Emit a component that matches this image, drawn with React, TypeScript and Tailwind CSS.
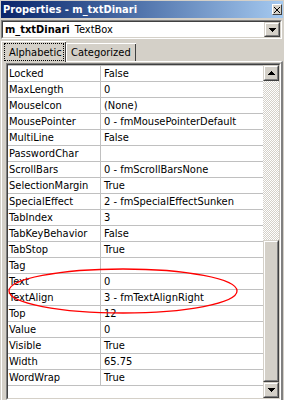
import React from "react";

const rows: [string, string][] = [
  ["Locked", "False"],
  ["MaxLength", "0"],
  ["MouseIcon", "(None)"],
  ["MousePointer", "0 - fmMousePointerDefault"],
  ["MultiLine", "False"],
  ["PasswordChar", ""],
  ["ScrollBars", "0 - fmScrollBarsNone"],
  ["SelectionMargin", "True"],
  ["SpecialEffect", "2 - fmSpecialEffectSunken"],
  ["TabIndex", "3"],
  ["TabKeyBehavior", "False"],
  ["TabStop", "True"],
  ["Tag", ""],
  ["Text", "0"],
  ["TextAlign", "3 - fmTextAlignRight"],
  ["Top", "12"],
  ["Value", "0"],
  ["Visible", "True"],
  ["Width", "65.75"],
  ["WordWrap", "True"],
];

function Raised({ className = "", children }: { className?: string; children?: React.ReactNode }) {
  return (
    <div className={`border border-t-[#d4d0c8] border-l-[#d4d0c8] border-r-[#404040] border-b-[#404040] ${className}`}>
      <div className="w-full h-full border border-t-white border-l-white border-r-[#808080] border-b-[#808080] bg-[#d4d0c8] flex items-center justify-center">
        {children}
      </div>
    </div>
  );
}

function Sunken({ className = "", innerClassName = "", children }: { className?: string; innerClassName?: string; children?: React.ReactNode }) {
  return (
    <div className={`border border-t-[#808080] border-l-[#808080] border-r-white border-b-white ${className}`}>
      <div className={`w-full h-full border border-t-[#404040] border-l-[#404040] border-r-[#d4d0c8] border-b-[#d4d0c8] ${innerClassName}`}>
        {children}
      </div>
    </div>
  );
}

function TriDown() {
  return (
    <svg width="7" height="4" viewBox="0 0 7 4" shapeRendering="crispEdges">
      <polygon points="0,0 7,0 3.5,4" fill="#000" />
    </svg>
  );
}

function TriUp() {
  return (
    <svg width="7" height="4" viewBox="0 0 7 4" shapeRendering="crispEdges">
      <polygon points="0,4 7,4 3.5,0" fill="#000" />
    </svg>
  );
}

export default function App() {
  return (
    <div className="relative w-[284px] h-[400px] overflow-hidden bg-[#d4d0c8] font-[DejaVu_Sans_Condensed,DejaVu_Sans,sans-serif] text-[11px] leading-none text-black">
      <div className="flex flex-col h-full pl-[1px] pt-[1px] pr-[1px]">
        {/* Title bar */}
        <div className="flex items-center h-[17px] bg-linear-to-r from-[#0a246a] to-[#a6caf0] pl-[2px] pr-[1px]">
          <span className="font-bold text-white text-[11px]">Properties - m_txtDinari</span>
          <div className="ml-auto w-[10px] h-[11px] border border-t-white border-l-white border-r-[#404040] border-b-[#404040] bg-[#d4d0c8] flex items-center justify-center">
            <svg width="6" height="6" viewBox="0 0 6 6" shapeRendering="crispEdges">
              <path d="M0 0 L6 6 M6 0 L0 6" stroke="#000" strokeWidth="1.2" />
            </svg>
          </div>
        </div>

        {/* Object combo */}
        <Sunken className="mt-[2px] h-[19px] mr-[1px]" innerClassName="bg-white flex items-center">
          <div className="flex-1 flex items-center pl-[2px] whitespace-nowrap">
            <span className="font-bold">m_txtDinari</span>
            <span className="ml-[5px]">TextBox</span>
          </div>
          <Raised className="w-[16px] h-[15px]">
            <TriDown />
          </Raised>
        </Sunken>

        {/* Tabs */}
        <div className="flex items-end h-[20px] mt-[2px] relative z-10">
          <div className="w-[65px] h-[21px] -mb-[1px] border-l border-t border-white bg-[#d4d0c8] flex">
            <div className="flex-1 flex pt-[1px] pb-[1px] pl-[2px] pr-[0px]">
              <div className="flex-1 border border-dotted border-black flex items-center pl-[4px]">Alphabetic</div>
            </div>
            <div className="w-[2px] border-r border-[#404040] bg-[#808080] border-l-0 [background:linear-gradient(to_right,#d4d0c8_0_1px,#808080_1px)]" />
          </div>
          <div className="w-[70px] h-[18px] border-l border-t border-white flex">
            <div className="flex-1 flex items-center pl-[4px]">Categorized</div>
            <div className="w-[2px] border-r border-[#404040] [background:linear-gradient(to_right,#d4d0c8_0_1px,#808080_1px)]" />
          </div>
        </div>

        {/* Panel */}
        <div className="flex-1 flex flex-col border-t border-l border-white border-r-2 border-r-[#808080] pt-[1px] pl-[4px]">
          <Sunken className="flex-1" innerClassName="flex bg-white">
            <div className="flex-1 flex flex-col border-t border-[#c0c0c0]">
              {rows.map(([name, value]) => (
                <div key={name} className="flex h-[16px] border-b border-[#c0c0c0] whitespace-nowrap">
                  <div className="w-[93px] border-r border-[#c0c0c0] flex items-center pl-[1px] overflow-hidden">{name}</div>
                  <div className="flex-1 flex items-center pl-[3px] overflow-hidden">{value}</div>
                </div>
              ))}
            </div>
            <div className="w-[16px] flex flex-col">
              <Raised className="h-[16px]">
                <TriUp />
              </Raised>
              <div className="flex-1 bg-[repeating-conic-gradient(#d4d0c8_0_25%,#ffffff_0_50%)] bg-[length:2px_2px]" />
              <Raised className="h-[142px]" />
              <Raised className="h-[16px]">
                <TriDown />
              </Raised>
            </div>
          </Sunken>
        </div>
      </div>

      {/* Red annotation ellipse */}
      <svg className="absolute inset-0 pointer-events-none" width="284" height="400" viewBox="0 0 284 400">
        <ellipse cx="123" cy="291" rx="114" ry="22" fill="none" stroke="#ff0000" strokeWidth="1.3" />
      </svg>
    </div>
  );
}
